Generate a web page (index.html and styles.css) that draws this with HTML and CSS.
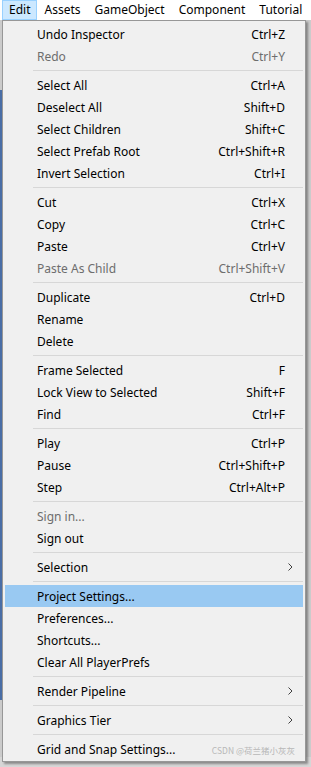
FILE: index.html
```html
<!DOCTYPE html>
<html>
<head>
<meta charset="utf-8">
<link rel="stylesheet" href="styles.css">
</head>
<body>
<div class="screen">
  <nav class="menubar">
    <span class="bar-item active">Edit</span>
    <span class="bar-item">Assets</span>
    <span class="bar-item">GameObject</span>
    <span class="bar-item">Component</span>
    <span class="bar-item">Tutorial</span>
  </nav>
  <div class="menu">
    <div class="row"><span class="label">Undo Inspector</span><span class="key">Ctrl+Z</span></div>
    <div class="row disabled"><span class="label">Redo</span><span class="key">Ctrl+Y</span></div>
    <div class="sep"></div>
    <div class="row"><span class="label">Select All</span><span class="key">Ctrl+A</span></div>
    <div class="row"><span class="label">Deselect All</span><span class="key">Shift+D</span></div>
    <div class="row"><span class="label">Select Children</span><span class="key">Shift+C</span></div>
    <div class="row"><span class="label">Select Prefab Root</span><span class="key">Ctrl+Shift+R</span></div>
    <div class="row"><span class="label">Invert Selection</span><span class="key">Ctrl+I</span></div>
    <div class="sep"></div>
    <div class="row"><span class="label">Cut</span><span class="key">Ctrl+X</span></div>
    <div class="row"><span class="label">Copy</span><span class="key">Ctrl+C</span></div>
    <div class="row"><span class="label">Paste</span><span class="key">Ctrl+V</span></div>
    <div class="row disabled"><span class="label">Paste As Child</span><span class="key">Ctrl+Shift+V</span></div>
    <div class="sep"></div>
    <div class="row"><span class="label">Duplicate</span><span class="key">Ctrl+D</span></div>
    <div class="row"><span class="label">Rename</span><span class="key"></span></div>
    <div class="row"><span class="label">Delete</span><span class="key"></span></div>
    <div class="sep"></div>
    <div class="row"><span class="label">Frame Selected</span><span class="key">F</span></div>
    <div class="row"><span class="label">Lock View to Selected</span><span class="key">Shift+F</span></div>
    <div class="row"><span class="label">Find</span><span class="key">Ctrl+F</span></div>
    <div class="sep"></div>
    <div class="row"><span class="label">Play</span><span class="key">Ctrl+P</span></div>
    <div class="row"><span class="label">Pause</span><span class="key">Ctrl+Shift+P</span></div>
    <div class="row"><span class="label">Step</span><span class="key">Ctrl+Alt+P</span></div>
    <div class="sep"></div>
    <div class="row disabled"><span class="label">Sign in...</span><span class="key"></span></div>
    <div class="row"><span class="label">Sign out</span><span class="key"></span></div>
    <div class="sep"></div>
    <div class="row"><span class="label">Selection</span><span class="key"></span><span class="arrow"><svg width="5" height="8" viewBox="0 0 5 8"><path d="M0.5 0.5 L4 4 L0.5 7.5" fill="none" stroke="#404040" stroke-width="1"/></svg></span></div>
    <div class="sep"></div>
    <div class="row hover"><span class="label">Project Settings...</span><span class="key"></span></div>
    <div class="row"><span class="label">Preferences...</span><span class="key"></span></div>
    <div class="row"><span class="label">Shortcuts...</span><span class="key"></span></div>
    <div class="row"><span class="label">Clear All PlayerPrefs</span><span class="key"></span></div>
    <div class="sep"></div>
    <div class="row"><span class="label">Render Pipeline</span><span class="key"></span><span class="arrow"><svg width="5" height="8" viewBox="0 0 5 8"><path d="M0.5 0.5 L4 4 L0.5 7.5" fill="none" stroke="#404040" stroke-width="1"/></svg></span></div>
    <div class="sep"></div>
    <div class="row"><span class="label">Graphics Tier</span><span class="key"></span><span class="arrow"><svg width="5" height="8" viewBox="0 0 5 8"><path d="M0.5 0.5 L4 4 L0.5 7.5" fill="none" stroke="#404040" stroke-width="1"/></svg></span></div>
    <div class="sep"></div>
    <div class="row last"><span class="label">Grid and Snap Settings...</span><span class="key"></span><span class="watermark">CSDN @荷兰猪小灰灰</span></div>
  </div>
</div>
</body>
</html>
```
FILE: styles.css
```css
* { box-sizing: border-box; }
html, body { margin: 0; padding: 0; }
body {
  width: 311px;
  height: 767px;
  overflow: hidden;
  font-family: "Noto Sans", "Noto Sans CJK SC", sans-serif;
  font-size: 12px;
  color: #000;
  background-color: #cbcbcb;
  background-image: linear-gradient(#4a6ea6, #4a6ea6), linear-gradient(#d6d6d6, #d6d6d6);
  background-size: 2px 610px, 311px 10px;
  background-position: 0 90px, 0 757px;
  background-repeat: no-repeat;
}
.screen { position: relative; }
.menubar {
  height: 20px;
  background: #fff;
  display: flex;
  align-items: stretch;
  padding-left: 2px;
  white-space: nowrap;
  overflow: hidden;
}
.bar-item {
  display: flex;
  align-items: center;
  padding: 0 6px;
  border: 1px solid transparent;
  font-size: 12px;
  line-height: 18px;
}
.bar-item.active {
  background: #cce8ff;
  border-color: #99d1ff;
}
.menu {
  position: relative;
  margin-left: 2px;
  width: 304px;
  background: #f0f0f0;
  border: 1px solid #979797;
  padding: 2px 0 1px;
  box-shadow: 2px 2px 2px rgba(0,0,0,0.35);
}
.row {
  position: relative;
  margin: 0 2px;
  height: 22px;
  display: flex;
  align-items: center;
  padding-left: 32px;
  white-space: nowrap;
}
.row .label { flex: 1; }
.row .key { padding-right: 18px; }
.row .arrow {
  position: absolute;
  right: 10px;
  top: 7px;
  display: flex;
}
.row.disabled { color: #6d6d6d; }
.row.hover { background: #99c9f2; }
.sep {
  height: 7px;
  padding: 3px 2px 3px 30px;
}
.sep::before {
  content: "";
  display: block;
  height: 1px;
  background: #d7d7d7;
}
.watermark {
  position: absolute;
  right: 8px;
  top: 6px;
  font-family: "Noto Sans CJK SC", sans-serif;
  font-size: 8.5px;
  color: #b8b8b8;
}
```
